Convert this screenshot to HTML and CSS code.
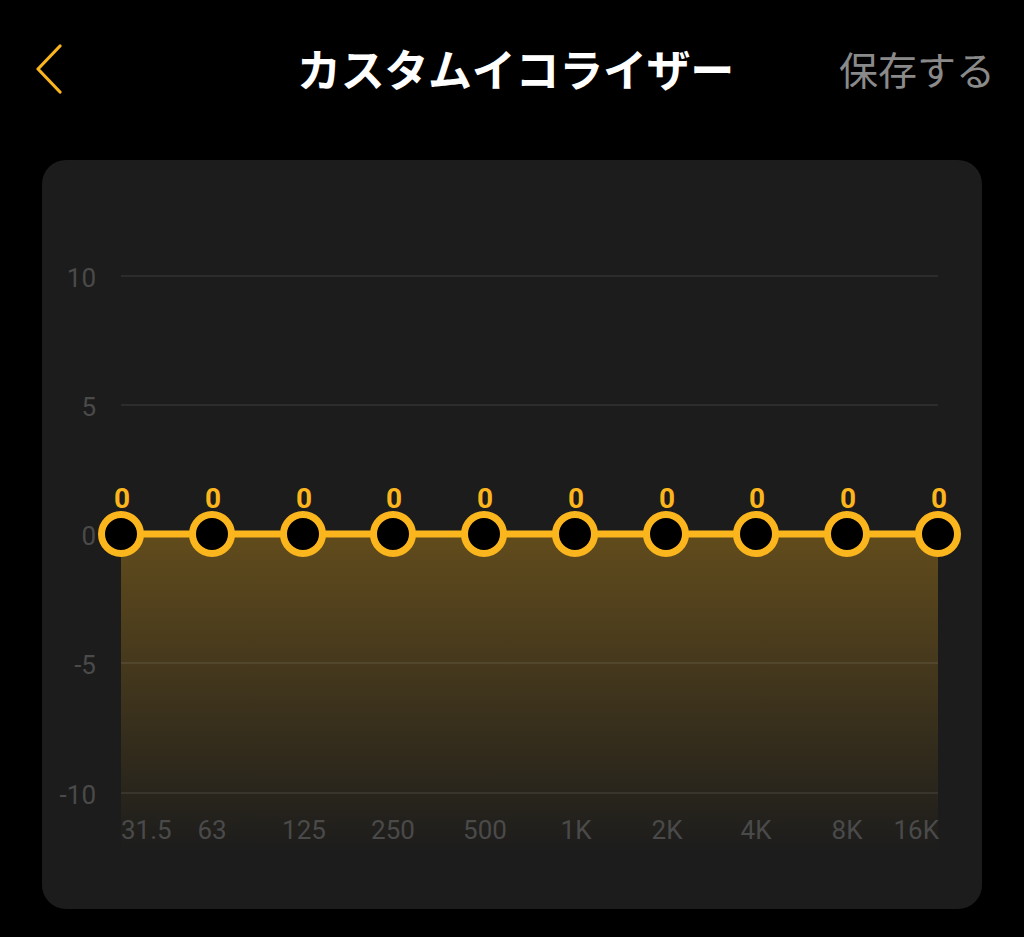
FILE: index.html
```html
<!DOCTYPE html>
<html lang="ja">
<head>
<meta charset="utf-8">
<title>カスタムイコライザー</title>
<link rel="stylesheet" href="styles.css">
</head>
<body>
<header class="topbar">
  <button class="back" aria-label="戻る">
    <svg width="30" height="52" viewBox="0 0 30 52"><path d="M24 3 L2 26 L24 49" fill="none" stroke="#fbb61d" stroke-width="3.2" stroke-linecap="round" stroke-linejoin="round"/></svg>
  </button>
  <h1 class="title">カスタムイコライザー</h1>
  <div class="save">保存する</div>
</header>
<main class="card">
  <svg class="chart" width="940" height="749" viewBox="42 160 940 749">
    <defs>
      <linearGradient id="fill" x1="0" y1="534" x2="0" y2="853" gradientUnits="userSpaceOnUse">
        <stop offset="0" stop-color="#fcb61d" stop-opacity="0.31"/>
        <stop offset="1" stop-color="#fcb61d" stop-opacity="0"/>
      </linearGradient>
    </defs>
    <rect x="121" y="534" width="817" height="319" fill="url(#fill)"/>
    <g class="grid">
      <line x1="121" y1="276" x2="938" y2="276"/>
      <line x1="121" y1="405" x2="938" y2="405"/>
      <line x1="121" y1="663" x2="938" y2="663"/>
      <line x1="121" y1="793" x2="938" y2="793"/>
    </g>
    <g class="ylab">
      <text x="96" y="287">10</text>
      <text x="96" y="416">5</text>
      <text x="96" y="545">0</text>
      <text x="96" y="674">-5</text>
      <text x="96" y="804">-10</text>
    </g>
    <g class="xlab">
      <text class="first" x="121" y="839">31.5</text>
      <text x="212" y="839">63</text>
      <text x="304" y="839">125</text>
      <text x="393" y="839">250</text>
      <text x="485" y="839">500</text>
      <text x="576" y="839">1K</text>
      <text x="667" y="839">2K</text>
      <text x="756" y="839">4K</text>
      <text x="847" y="839">8K</text>
      <text class="last" x="939" y="839">16K</text>
    </g>
    <line class="curve" x1="121" y1="534" x2="938" y2="534"/>
    <g class="knobs">
      <circle cx="121" cy="534" r="19.5"/>
      <circle cx="212" cy="534" r="19.5"/>
      <circle cx="303" cy="534" r="19.5"/>
      <circle cx="393" cy="534" r="19.5"/>
      <circle cx="484" cy="534" r="19.5"/>
      <circle cx="575" cy="534" r="19.5"/>
      <circle cx="666" cy="534" r="19.5"/>
      <circle cx="756" cy="534" r="19.5"/>
      <circle cx="847" cy="534" r="19.5"/>
      <circle cx="938" cy="534" r="19.5"/>
    </g>
    <g class="vals">
      <text x="122" y="508">0</text>
      <text x="213" y="508">0</text>
      <text x="304" y="508">0</text>
      <text x="394" y="508">0</text>
      <text x="485" y="508">0</text>
      <text x="576" y="508">0</text>
      <text x="667" y="508">0</text>
      <text x="757" y="508">0</text>
      <text x="848" y="508">0</text>
      <text x="939" y="508">0</text>
    </g>
  </svg>
</main>
</body>
</html>
```
FILE: styles.css
```css
html, body {
  margin: 0;
  padding: 0;
  background: #000;
}
body {
  width: 1024px;
  height: 937px;
  overflow: hidden;
  font-family: "Noto Sans CJK JP", "Noto Sans", sans-serif;
}
.topbar {
  height: 136px;
  display: grid;
  grid-template-columns: 1fr auto 1fr;
  align-items: center;
  padding: 0 29px 0 36px;
}
.back {
  justify-self: start;
  background: none;
  border: 0;
  padding: 0;
  display: flex;
  margin-top: 2px;
}
.title {
  margin: 0;
  color: #fff;
  font-size: 44px;
  font-weight: 700;
  line-height: 1;
  letter-spacing: -0.3px;
}
.save {
  justify-self: end;
  color: #8a8a8a;
  font-size: 39px;
  line-height: 1;
}
.card {
  margin: 24px 42px 0;
  width: 940px;
  height: 749px;
  background: #1c1c1c;
  border-radius: 24px;
  overflow: hidden;
}
.chart {
  display: block;
  font-family: Roboto, "Liberation Sans", sans-serif;
}
.grid line {
  stroke: rgba(255, 255, 255, 0.1);
  stroke-width: 1.5;
}
.ylab text {
  fill: #4a4a4a;
  font-size: 26px;
  text-anchor: end;
}
.xlab text {
  fill: #4a4a4a;
  font-size: 26px;
  text-anchor: middle;
}
.xlab text.first {
  text-anchor: start;
}
.xlab text.last {
  text-anchor: end;
}
.curve {
  stroke: #fcb61d;
  stroke-width: 7;
}
.knobs circle {
  fill: #000;
  stroke: #fcb61d;
  stroke-width: 7;
}
.vals text {
  fill: #fcb61d;
  font-size: 28px;
  font-weight: 700;
  text-anchor: middle;
}
```
